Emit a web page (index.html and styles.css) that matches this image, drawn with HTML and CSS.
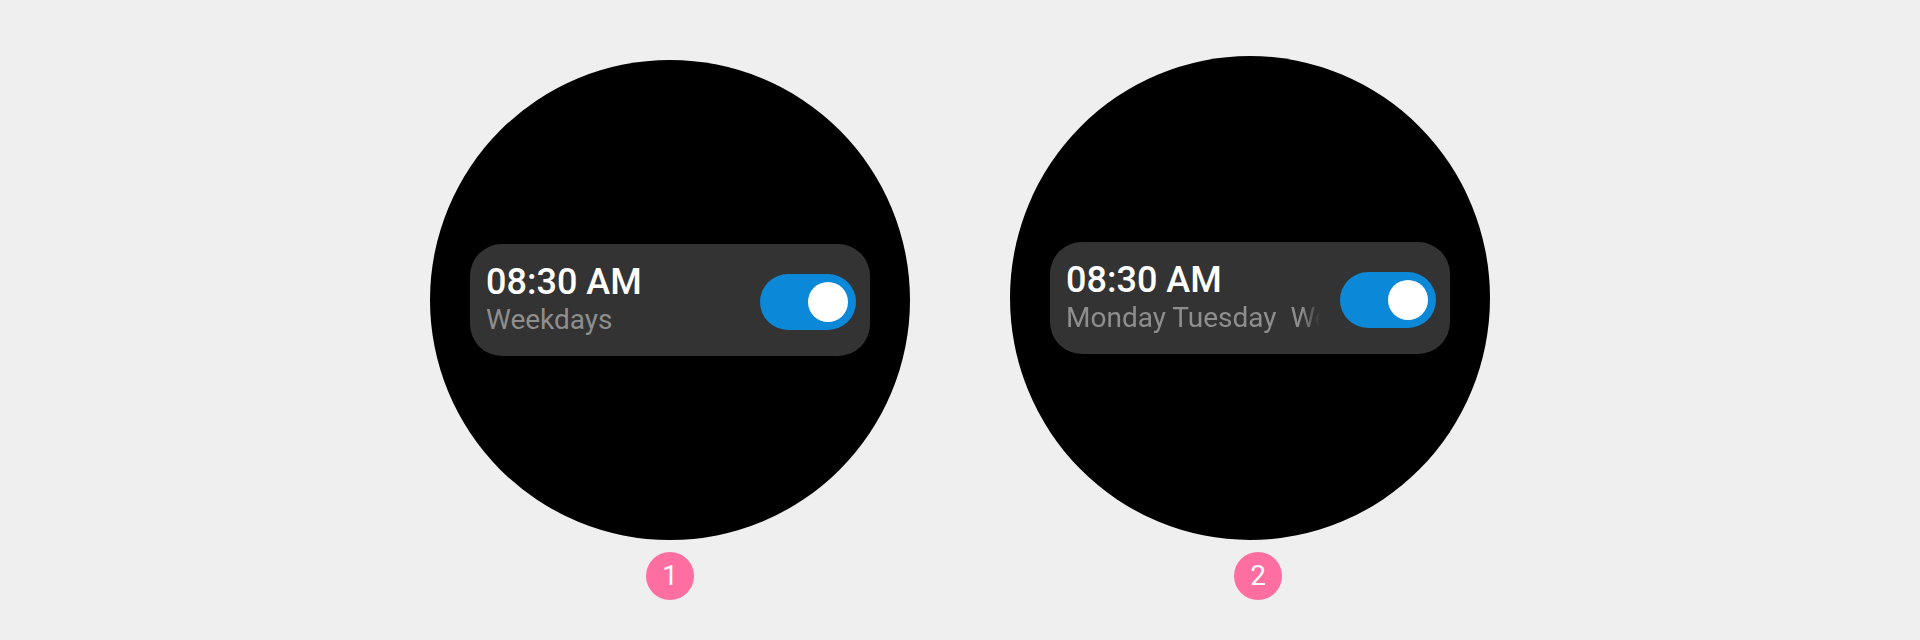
FILE: index.html
```html
<!DOCTYPE html>
<html lang="en">
<head>
    <meta charset="UTF-8">
    <meta name="viewport" content="width=device-width, initial-scale=1.0">
    <title>Alarm Chip - Watch Preview</title>
    <link rel="stylesheet" href="styles.css">
</head>
<body>

<div class="previews">
    <div class="preview">
        <div class="watch watch-first">
            <div class="alarm-chip">
                <div class="alarm-text">
                    <div class="alarm-time">08:30 AM</div>
                    <div class="alarm-days">Weekdays</div>
                </div>
                <div class="toggle toggle-on"><span class="toggle-thumb"></span></div>
            </div>
        </div>
        <div class="step-badge">1</div>
    </div>

    <div class="preview">
        <div class="watch watch-second">
            <div class="alarm-chip">
                <div class="alarm-text">
                    <div class="alarm-time">08:30 AM</div>
                    <div class="alarm-days alarm-days-fade">Monday Tuesday&nbsp; Wednesday Thursday Friday</div>
                </div>
                <div class="toggle toggle-on"><span class="toggle-thumb"></span></div>
            </div>
        </div>
        <div class="step-badge step-badge-shifted">2</div>
    </div>
</div>

</body>
</html>
```

FILE: styles.css
```css
body {
    font-family: Roboto, 'Noto Sans', sans-serif;
    margin: 0;
    padding: 0;
    background: #efefef;
}

.previews {
    display: flex;
    justify-content: center;
    align-items: flex-start;
    gap: 100px;
    padding-top: 56px;
}

.preview {
    display: flex;
    flex-direction: column;
    align-items: center;
    gap: 12px;
}

.watch {
    width: 480px;
    height: 480px;
    border-radius: 50%;
    background: #000;
    display: flex;
    align-items: center;
    justify-content: center;
}

.watch-first {
    margin-top: 4px;
}

.watch-second {
    height: 484px;
}

.alarm-chip {
    width: 400px;
    height: 112px;
    box-sizing: border-box;
    padding: 0 14px 0 16px;
    background: #333333;
    border-radius: 32px;
    display: flex;
    align-items: center;
}

.alarm-text {
    flex: 1;
    min-width: 0;
    margin-right: 20px;
}

.alarm-time {
    color: #fff;
    font-size: 36px;
    font-weight: 500;
    line-height: 40px;
}

.alarm-days {
    color: #8e8e8e;
    font-size: 28px;
    line-height: 36px;
    white-space: nowrap;
    overflow: hidden;
}

.alarm-days-fade {
    -webkit-mask-image: linear-gradient(to right, #000 calc(100% - 18px), transparent);
    mask-image: linear-gradient(to right, #000 calc(100% - 18px), transparent);
}

.toggle {
    width: 96px;
    height: 56px;
    box-sizing: border-box;
    padding: 8px;
    border-radius: 28px;
    background: #555;
    display: flex;
    margin-top: 4px;
}

.toggle-on {
    background: #0b88d7;
    justify-content: flex-end;
}

.toggle-thumb {
    width: 40px;
    height: 40px;
    border-radius: 50%;
    background: #fff;
}

.step-badge {
    width: 48px;
    height: 48px;
    border-radius: 50%;
    background: #fe6ea0;
    color: #fff;
    font-size: 28px;
    line-height: 48px;
    text-align: center;
}

.step-badge-shifted {
    margin-left: 16px;
}
```
